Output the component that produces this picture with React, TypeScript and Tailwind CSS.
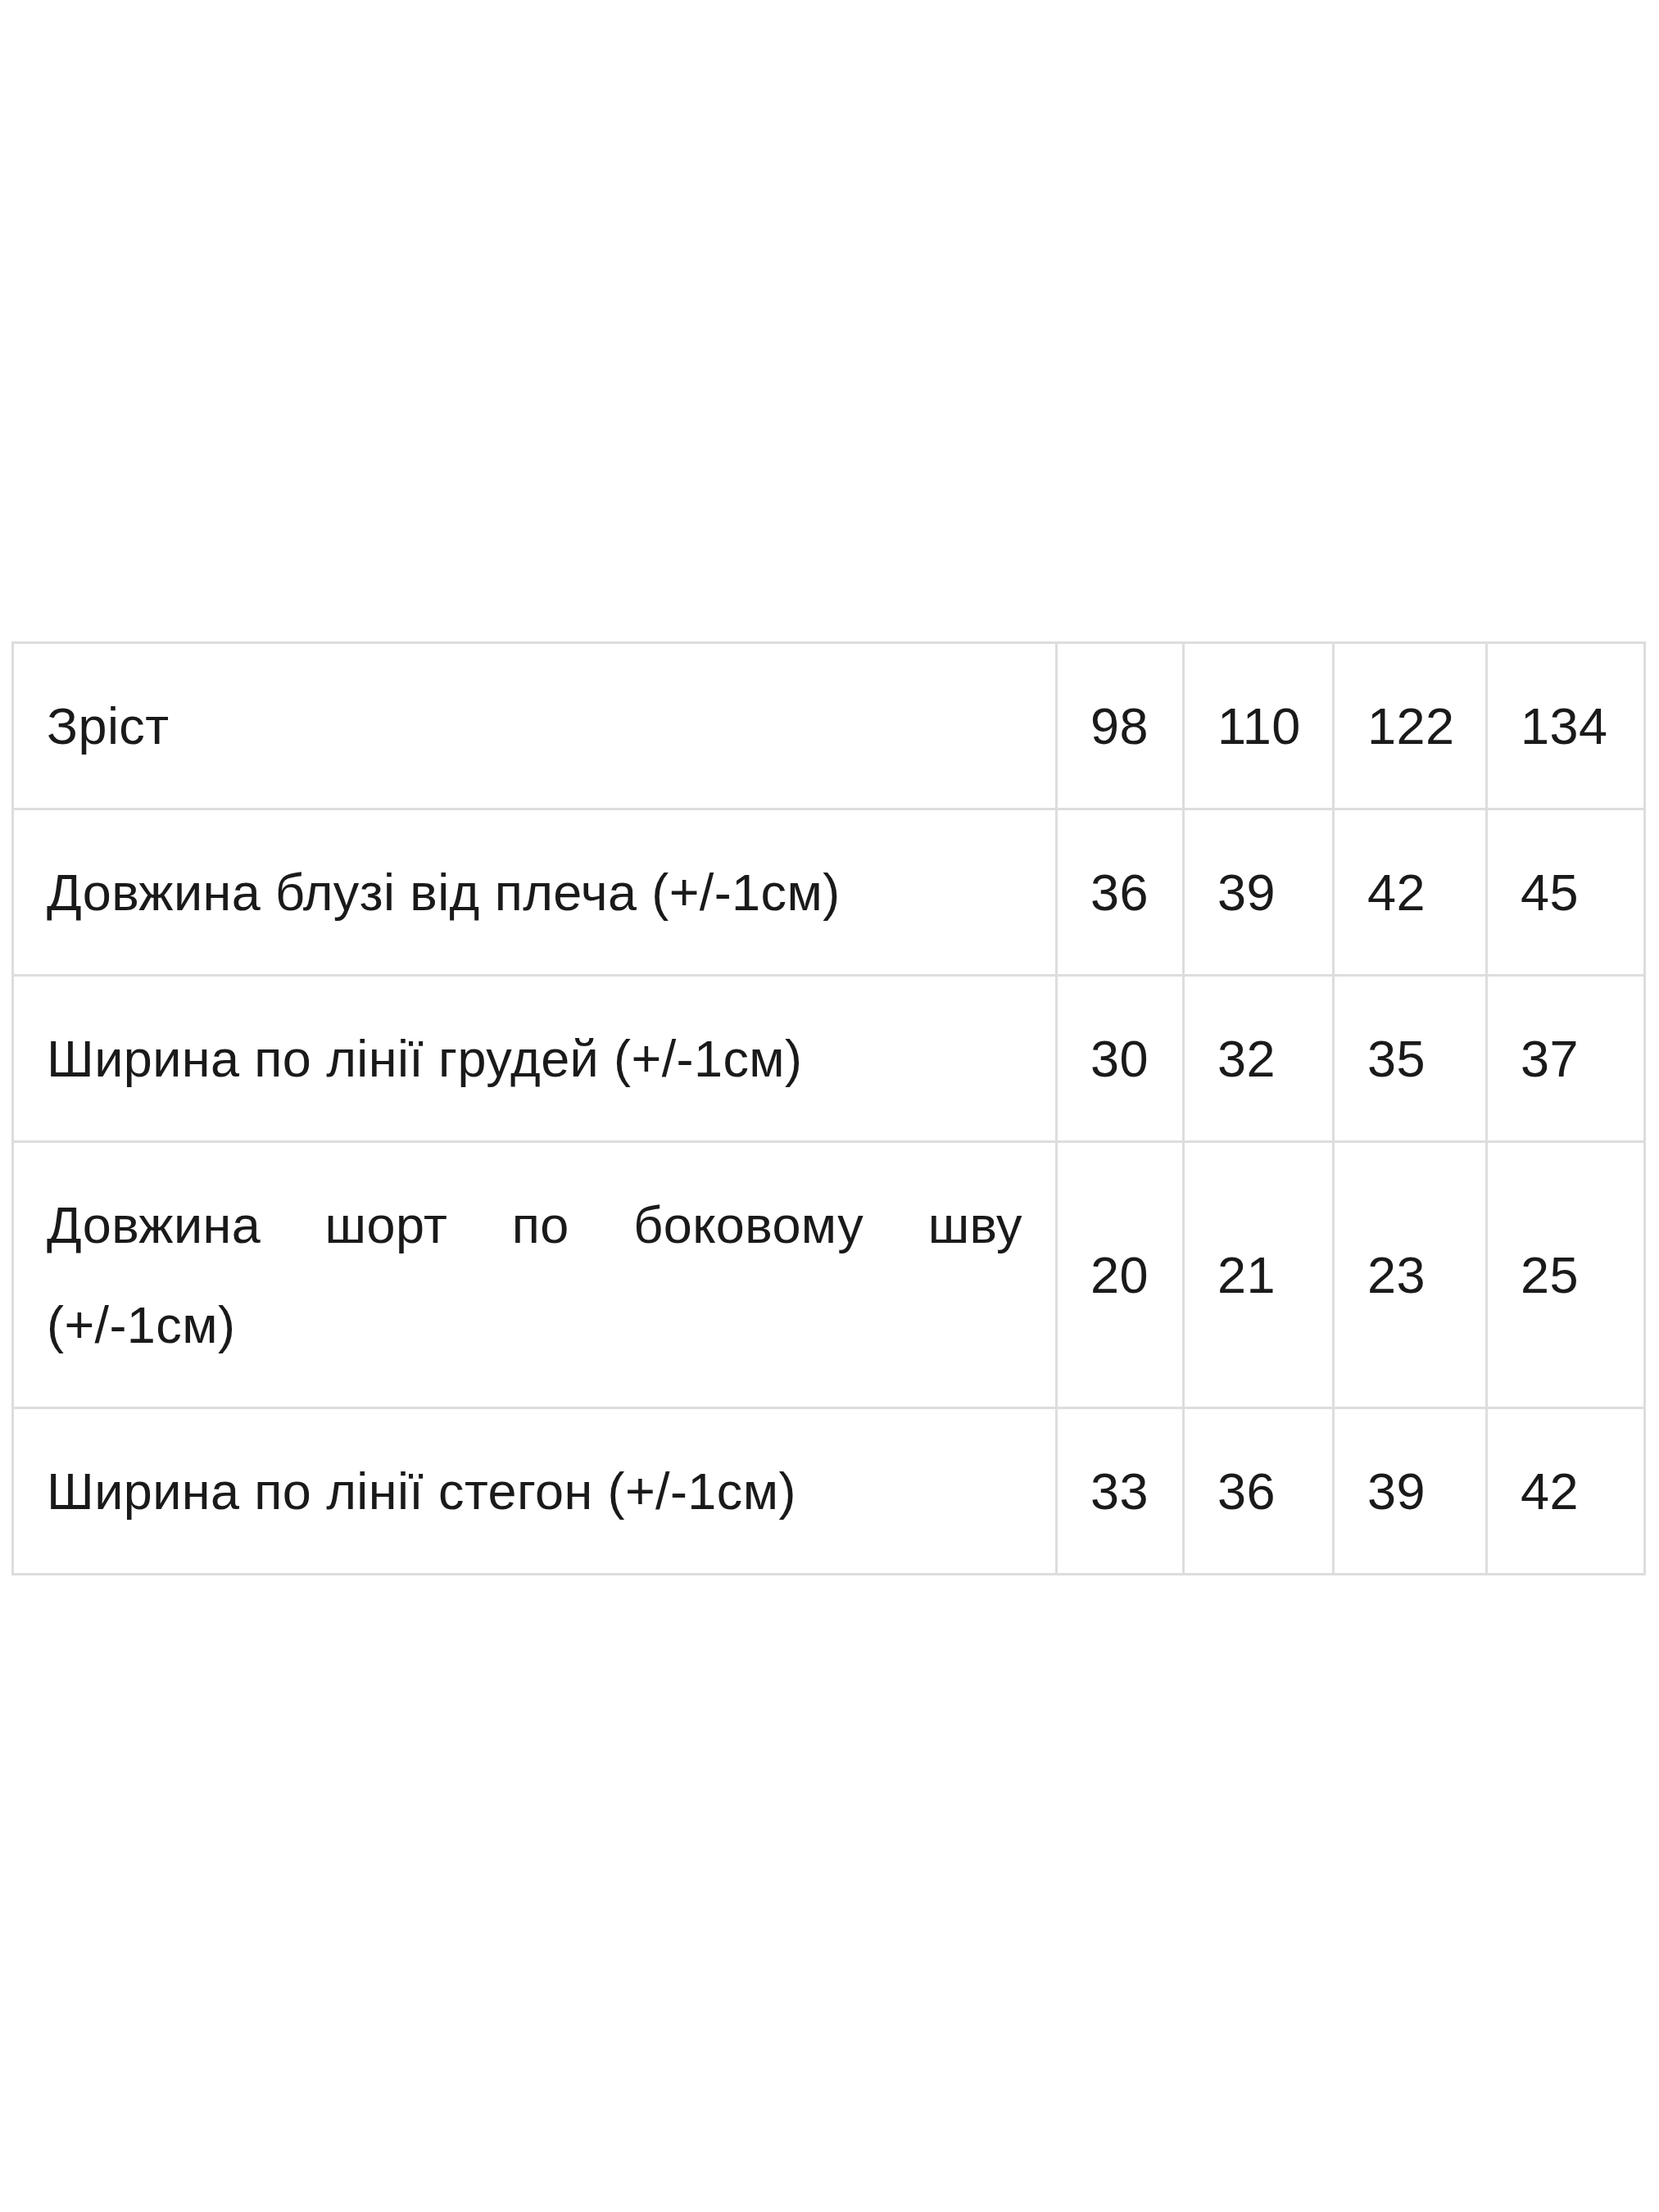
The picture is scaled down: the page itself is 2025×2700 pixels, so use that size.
export default function App() {
  const rows = [
    { label: 'Зріст', values: ['98', '110', '122', '134'] },
    { label: 'Довжина блузі від плеча (+/-1см)', values: ['36', '39', '42', '45'] },
    { label: 'Ширина по лінії грудей (+/-1см)', values: ['30', '32', '35', '37'] },
    { label: null, values: ['20', '21', '23', '25'] },
    { label: 'Ширина по лінії стегон (+/-1см)', values: ['33', '36', '39', '42'] },
  ]

  const cell = 'border-[3px] border-[#dddddd] px-[40px] py-[39px] align-middle text-left'

  return (
    <div className="min-h-[2700px] w-full bg-white pt-[783px] pl-[14px] font-[family-name:'Liberation_Sans',Arial,sans-serif] text-[63px] leading-[122px] tracking-[0.4px] text-[#1a1a1a]">
      <table className="w-[1992px] table-fixed border-collapse border-[3px] border-[#d8d8d8]">
        <colgroup>
          <col className="w-[1274px]" />
          <col className="w-[155px]" />
          <col className="w-[183px]" />
          <col className="w-[187px]" />
          <col className="w-[193px]" />
        </colgroup>
        <tbody>
          {rows.map((row, i) => (
            <tr key={i}>
              <td className={cell}>
                {row.label ?? (
                  <>
                    {/* перший рядок розтягнуто по ширині, як у оригіналі */}
                    <div className="text-justify [text-align-last:justify]">Довжина шорт по боковому шву</div>
                    <div>(+/-1см)</div>
                  </>
                )}
              </td>
              {row.values.map((v, j) => (
                <td key={j} className={cell}>
                  {v}
                </td>
              ))}
            </tr>
          ))}
        </tbody>
      </table>
    </div>
  )
}
